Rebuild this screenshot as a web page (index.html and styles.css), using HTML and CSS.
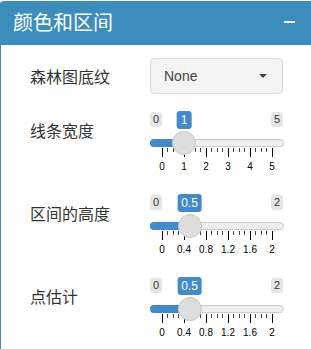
FILE: index.html
```html
<!DOCTYPE html>
<html lang="zh">
<head>
<meta charset="utf-8">
<link rel="stylesheet" href="styles.css">
</head>
<body>
<div class="box">
  <div class="box-header">
    <h3 class="box-title">颜色和区间</h3>
    <span class="collapse-btn"></span>
  </div>
  <div class="box-body">
    <div class="row row-select">
      <label class="lbl">森林图底纹</label>
      <div class="select"><span>None</span><span class="caret"></span></div>
    </div>

    <div class="row row-slider">
      <label class="lbl">线条宽度</label>
      <div class="irs" style="--pos: 34px">
        <div class="irs-top"><span class="irs-min">0</span><span class="irs-single">1</span><span class="irs-max">5</span></div>
        <div class="irs-rail"><span class="irs-line"></span><span class="irs-bar"></span><span class="irs-handle"></span></div>
        <div class="irs-grid"></div>
        <div class="irs-nums"><span>0</span><span>1</span><span>2</span><span>3</span><span>4</span><span>5</span></div>
      </div>
    </div>

    <div class="row row-slider">
      <label class="lbl">区间的高度</label>
      <div class="irs" style="--pos: 39.5px">
        <div class="irs-top"><span class="irs-min">0</span><span class="irs-single">0.5</span><span class="irs-max">2</span></div>
        <div class="irs-rail"><span class="irs-line"></span><span class="irs-bar"></span><span class="irs-handle"></span></div>
        <div class="irs-grid"></div>
        <div class="irs-nums"><span>0</span><span>0.4</span><span>0.8</span><span>1.2</span><span>1.6</span><span>2</span></div>
      </div>
    </div>

    <div class="row row-slider">
      <label class="lbl">点估计</label>
      <div class="irs" style="--pos: 39.5px">
        <div class="irs-top"><span class="irs-min">0</span><span class="irs-single">0.5</span><span class="irs-max">2</span></div>
        <div class="irs-rail"><span class="irs-line"></span><span class="irs-bar"></span><span class="irs-handle"></span></div>
        <div class="irs-grid"></div>
        <div class="irs-nums"><span>0</span><span>0.4</span><span>0.8</span><span>1.2</span><span>1.6</span><span>2</span></div>
      </div>
    </div>
  </div>
</div>
</body>
</html>
```
FILE: styles.css
```css
* { box-sizing: border-box; }
html, body { margin: 0; padding: 0; background: #fff; overflow: hidden; }
body {
  padding-top: 1px;
  font-family: "Liberation Sans", Arial, sans-serif;
  color: #333;
}
.box {
  border-left: 1px solid #3c8dbc;
  border-top-left-radius: 3px;
  min-height: 348px;
  background: #fff;
}
.box-header {
  height: 45px;
  background: #3c8dbc;
  border-bottom: 1px solid #f4f4f4;
  border-top-left-radius: 3px;
  display: flex;
  align-items: center;
  justify-content: space-between;
  padding: 0 16px 2px 12px;
  color: #fff;
}
.box-title {
  margin: 0;
  font: 400 20px/20px "Noto Sans CJK SC", sans-serif;
}
.collapse-btn {
  width: 11px;
  height: 2px;
  background: #fff;
  margin-bottom: 1px;
}
.box-body {
  padding: 12px 0 0 29px;
  display: flex;
  flex-direction: column;
  gap: 18px;
}
.row {
  display: grid;
  grid-template-columns: 120px 134px;
}
.row-select { align-items: center; }
.row-slider { padding-bottom: 4px; }
.lbl {
  font: 400 16px/20px "Noto Sans CJK SC", sans-serif;
  color: #333;
}
.row-slider .lbl { margin-top: 8px; }

.select {
  width: 133px;
  height: 36px;
  background: #f4f4f4;
  border: 1px solid #ddd;
  border-radius: 4px;
  display: flex;
  align-items: center;
  justify-content: space-between;
  padding: 0 15px 0 13px;
  font-size: 14px;
  color: #444;
}
.caret {
  width: 0;
  height: 0;
  border-left: 4px solid transparent;
  border-right: 4px solid transparent;
  border-top: 4px solid #444;
}

.irs {
  width: 134px;
  display: flex;
  flex-direction: column;
}
.irs-top {
  position: relative;
  height: 15px;
  display: flex;
  justify-content: space-between;
  padding-right: 1px;
}
.irs-min, .irs-max {
  font-size: 11px;
  line-height: 13px;
  padding: 1px 3px;
  background: rgba(0, 0, 0, 0.1);
  border-radius: 3px;
  color: #333;
}
.irs-single {
  position: absolute;
  top: -1px;
  left: var(--pos);
  transform: translateX(-50%);
  font-size: 12px;
  line-height: 16px;
  padding: 1px 4px;
  background: #428bca;
  color: #fff;
  border-radius: 3px;
}
.irs-rail {
  position: relative;
  height: 17px;
  margin-top: 4px;
}
.irs-line {
  position: absolute;
  top: 8px;
  left: 0;
  right: 0;
  height: 8px;
  background: #eee;
  border: 1px solid #ccc;
  border-radius: 16px;
}
.irs-bar {
  position: absolute;
  top: 8px;
  left: 0;
  width: var(--pos);
  height: 8px;
  background: #428bca;
  border-radius: 16px 0 0 16px;
}
.irs-handle {
  position: absolute;
  top: 0;
  left: var(--pos);
  width: 24px;
  height: 24px;
  margin-left: -12px;
  background: #ddd;
  border: 1px solid #c8c8c8;
  border-radius: 50%;
}
.irs-grid {
  height: 9px;
  margin-left: 12px;
  width: 111px;
  background-image:
    repeating-linear-gradient(90deg, #000 0 1px, transparent 1px 22px),
    repeating-linear-gradient(90deg, #444 0 1px, transparent 1px 5.5px);
  background-size: 111px 9px, 111px 4px;
  background-repeat: no-repeat;
}
.irs-nums {
  margin-top: 4px;
  margin-left: 1px;
  display: grid;
  grid-template-columns: repeat(6, 22px);
  font-size: 10px;
  line-height: 12px;
  text-align: center;
  color: #000;
}
```
